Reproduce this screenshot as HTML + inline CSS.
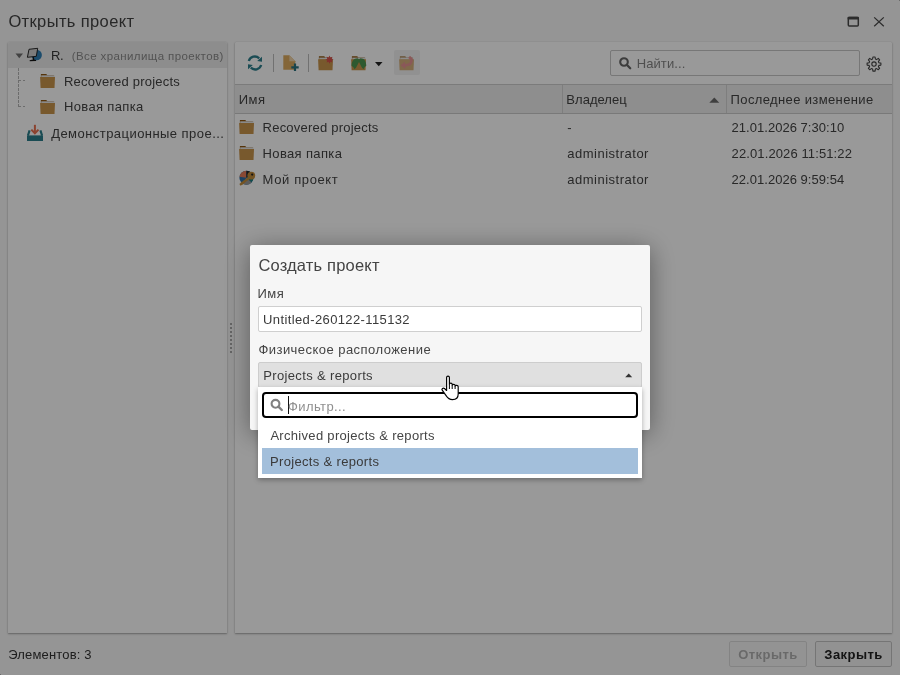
<!DOCTYPE html>
<html><head><meta charset="utf-8">
<style>
*{box-sizing:border-box;margin:0;padding:0}
html,body{width:900px;height:675px;overflow:hidden}
body{will-change:transform;background:#f8f8f8;font-family:"Liberation Sans",sans-serif;color:#444;position:relative}
.abs{position:absolute}
svg{position:absolute;overflow:visible}
.tx{position:absolute;white-space:nowrap;font-size:13px;line-height:16px}
.title{left:8px;top:11px;font-size:17px;line-height:20px;color:#444;letter-spacing:.1px}
.panel{background:#fff;border-radius:1px 1px 0 0;box-shadow:0 1px 2px rgba(0,0,0,.32),0 0 1px rgba(0,0,0,.25)}
#lp{left:8px;top:42px;width:219px;height:591px}
#rp{left:235px;top:42px;width:657px;height:591px}
.sel{left:0;top:0;width:219px;height:26px;background:#ececec;border-radius:2px 2px 0 0}
.toolbar{left:0;top:0;width:657px;height:43px;border-bottom:1px solid #cdcdcd}
.hdr{left:0;top:43px;width:657px;height:29px;background:#ededed;border-bottom:1px solid #cacaca}
.col{top:0;height:28px;border-left:1px solid #d2d2d2}
.sep{top:12px;width:1px;height:18px;background:#bdbdbd}
.overlay{left:0;top:0;width:900px;height:675px;background:rgba(0,0,0,.4)}
.modal{left:250px;top:245px;width:400px;height:185px;background:#f6f6f6;border-radius:2px;box-shadow:0 4px 26px rgba(0,0,0,.42)}
.input{background:#fff;border:1px solid #cfcfcf;border-radius:2px}
.dd{left:258px;top:387px;width:384px;height:91px;background:#fff;box-shadow:0 2px 5px rgba(0,0,0,.3)}
.btn{position:absolute;top:641px;height:26px;border:1px solid #c4c4c4;border-radius:2px;font-weight:bold;font-size:13px;text-align:center;line-height:24px;padding-top:1px;letter-spacing:.45px;background:#f3f3f3}
</style></head><body>
<svg width="0" height="0" style="position:absolute">
 <defs>
  <g id="folder">
   <path d="M0.9 0.9 h5.3 l1.2 1.3 h6.5 v2 h-13z" fill="#8f5812"/>
   <rect x="1.2" y="2.3" width="13.4" height="1.8" fill="#e6e6e6"/>
   <path d="M0.1 3.9 h14.9 l-0.5 11 h-13.9z" fill="#c9944b"/>
  </g>
 </defs>
</svg>

<div class="tx title" style="left:8.4px;top:11px;font-size:16.5px;line-height:20px;letter-spacing:.37px">Открыть проект</div>
<!-- window controls -->
<svg style="left:846px;top:15px" width="14" height="13" viewBox="0 0 14 13"><rect x="2.3" y="2.5" width="10" height="8.4" fill="none" stroke="#4a4a4a" stroke-width="1.5" rx="1"/><rect x="1.6" y="1.7" width="11.4" height="2.9" rx=".8" fill="#4a4a4a"/></svg>
<svg style="left:872px;top:16px" width="13" height="12" viewBox="0 0 13 12"><path d="M2.2 1.4 L11.8 10.2 M11.8 1.4 L2.2 10.2" stroke="#4a4a4a" stroke-width="1.25"/></svg>

<div id="lp" class="abs panel">
  <div class="abs sel"></div>
  <!-- tree lines -->
  <div class="abs" style="left:10px;top:26px;width:1px;height:39px;background:repeating-linear-gradient(to bottom,#b4b4b4 0 3px,transparent 3px 4px)"></div>
  <div class="abs" style="left:10px;top:38px;width:7px;height:1px;background:repeating-linear-gradient(to right,#b4b4b4 0 3px,transparent 3px 5px)"></div>
  <div class="abs" style="left:10px;top:64px;width:7px;height:1px;background:repeating-linear-gradient(to right,#b4b4b4 0 3px,transparent 3px 5px)"></div>
</div>
<!-- tree content -->
<svg style="left:15px;top:53px" width="9" height="6" viewBox="0 0 9 6"><path d="M0.5 0.5 h7.5 l-3.75 4.8z" fill="#6f6f6f"/></svg>
<svg style="left:27px;top:48px" width="16" height="15" viewBox="0 0 16 15">
  <circle cx="9.6" cy="7" r="5.3" fill="#2f7fb5"/>
  <path d="M2 1.3 L10.7 0.3 L9.3 8.3 L0.4 9.3 Z" fill="#cfcfcf" stroke="#151515" stroke-width="0.9" stroke-linejoin="round"/>
  <path d="M5.6 9.2 L5.9 11.6 L2.6 12.3 L2.8 13.2 L9.2 13.1 L9 12.1 L7.2 11.5 L7 9" fill="#151515"/>
</svg>
<div class="tx" style="left:51px;top:47.5px;color:#3a3a3a;letter-spacing:-.3px">R.</div>
<div class="tx" style="left:71.7px;top:48px;color:#8a8a8a;font-size:11.5px;letter-spacing:.4px">(Все хранилища проектов)</div>

<svg style="left:40px;top:73.2px" width="16" height="15" viewBox="0 0 16 15"><use href="#folder"/></svg>
<div class="tx" style="left:64px;top:73.8px;color:#444;letter-spacing:.22px">Recovered projects</div>
<svg style="left:40px;top:99.2px" width="16" height="15" viewBox="0 0 16 15"><use href="#folder"/></svg>
<div class="tx" style="left:64px;top:99.4px;color:#444;letter-spacing:.35px">Новая папка</div>

<svg style="left:26px;top:124px" width="18" height="18" viewBox="0 0 18 18">
  <path d="M3.6 6.4 L1.9 11.6 M14.4 6.4 L16.1 11.6" stroke="#2a7e8a" stroke-width="2.1"/>
  <rect x="1" y="11.4" width="16" height="5.6" fill="#2a7e8a"/>
  <path d="M8.9 0.8 V9" stroke="#e8704f" stroke-width="2"/>
  <path d="M5.3 5.6 L8.9 9.3 L12.5 5.6" fill="none" stroke="#e8704f" stroke-width="2"/>
</svg>
<div class="tx" style="left:51.2px;top:125.5px;color:#444;letter-spacing:.45px">Демонстрационные прое...</div>

<div id="rp" class="abs panel">
  <div class="abs toolbar"></div>
  <div class="abs sep" style="left:38px"></div>
  <div class="abs sep" style="left:73px"></div>
  <div class="abs" style="left:159px;top:8px;width:26px;height:25px;background:#f2f2f2;border-radius:2px"></div>
  <div class="abs input" style="left:375px;top:8px;width:250px;height:26px;border-color:#c6c6c6"></div>
  <div class="abs hdr">
    <div class="abs col" style="left:327px"></div>
    <div class="abs col" style="left:491px"></div>
  </div>
</div>
<!-- toolbar icons -->
<svg style="left:247px;top:55px" width="16" height="16" viewBox="0 0 16 16">
  <path d="M1.8 6 A6.3 6.3 0 0 1 12.2 3.3" fill="none" stroke="#2d7f8d" stroke-width="2.3"/>
  <path d="M15 1.8 L15 6.8 L10.2 6 Z" fill="#2d7f8d"/>
  <path d="M14.2 10 A6.3 6.3 0 0 1 3.8 12.7" fill="none" stroke="#2d7f8d" stroke-width="2.3"/>
  <path d="M1 14.2 L1 9.2 L5.8 10 Z" fill="#2d7f8d"/>
</svg>
<svg style="left:283px;top:55px" width="17" height="17" viewBox="0 0 17 17">
  <path d="M0.3 0.2 H6.4 L12.3 6.3 V14.8 H0.3 Z" fill="#dcab60"/>
  <path d="M6.4 0.2 L12.3 6.3 H6.4 Z" fill="#efd3a8"/>
  <path d="M12 8.6 V15.9 M8.3 12.3 H15.7" stroke="#2b7380" stroke-width="2.2"/>
</svg>
<svg style="left:318px;top:55px" width="16" height="16" viewBox="0 0 16 16">
  <use href="#folder" y="0.3"/>
  <path d="M11.5 0.6 L12.4 2.6 L14.4 1.8 L13.8 3.9 L15.6 4.7 L13.8 5.6 L14.4 7.6 L12.4 6.8 L11.5 8.8 L10.6 6.8 L8.6 7.6 L9.2 5.6 L7.4 4.7 L9.2 3.9 L8.6 1.8 L10.6 2.6 Z" fill="#d6514b"/>
</svg>
<svg style="left:351px;top:55px" width="16" height="16" viewBox="0 0 16 16">
  <use href="#folder" y="0.3"/>
  <path d="M0.5 10.8 C0.8 6 3 3.3 6.5 3.3 L8 4.3 L9.5 3.3 C13 3.3 15.2 6 15.3 10.8 L13.6 12.3 L12.4 14.2 L10.8 12.6 L8 7 L5.2 12.6 L3.6 14.2 L2.4 12.3 Z" fill="#4e944f"/>
</svg>
<svg style="left:375px;top:62px" width="8" height="5" viewBox="0 0 8 5"><path d="M0 0 H7.5 L3.75 4.2Z" fill="#222"/></svg>
<svg style="left:399px;top:55px" width="16" height="16" viewBox="0 0 16 16" opacity=".7">
  <use href="#folder" y="0.3"/>
  <path d="M11 0.8 L14 3.8 L13.5 7 C13 9.3 11 11 8.5 11.3 L6.5 11.4 L6.2 14 L1.5 10.3 L5.8 6.8 L6.2 8.9 L8.5 8.6 C10 8.3 10.8 7.4 11 6.4 L10.4 4.1 L9.2 2.9 Z" fill="#e36b6b"/>
</svg>
<!-- search -->
<svg style="left:619px;top:57px" width="13" height="13" viewBox="0 0 13 13"><circle cx="5" cy="5" r="3.8" fill="none" stroke="#666" stroke-width="2.1"/><path d="M7.8 7.8 L11.2 11.2" stroke="#666" stroke-width="2.3" stroke-linecap="round"/></svg>
<div class="tx" style="left:636.7px;top:56.3px;color:#858585;letter-spacing:.1px">Найти...</div>
<!-- gear -->
<svg style="left:866px;top:55.5px" width="16" height="16" viewBox="0 0 16 16">
  <path d="M6.9 1 H9.1 L9.4 3 L10.6 3.6 L12.3 2.4 L13.6 3.9 L12.4 5.5 L12.9 6.8 L14.9 7.1 V9.1 L12.9 9.4 L12.4 10.7 L13.6 12.3 L12.3 13.7 L10.6 12.6 L9.4 13.1 L9.1 15.1 H6.9 L6.6 13.1 L5.4 12.6 L3.7 13.7 L2.4 12.3 L3.6 10.7 L3.1 9.4 L1.1 9.1 V7.1 L3.1 6.8 L3.6 5.5 L2.4 3.9 L3.7 2.4 L5.4 3.6 L6.6 3 Z" fill="none" stroke="#444" stroke-width="1.1" stroke-linejoin="round"/>
  <circle cx="8" cy="8.05" r="2.2" fill="none" stroke="#444" stroke-width="1.1"/>
</svg>

<!-- header texts -->
<div class="tx" style="left:238.7px;top:91.7px;color:#444;letter-spacing:.5px">Имя</div>
<div class="tx" style="left:566.3px;top:91.7px;color:#444;letter-spacing:.04px">Владелец</div>
<svg style="left:709px;top:97px" width="11" height="6" viewBox="0 0 11 6"><path d="M0.3 5.8 L5.3 0.6 L10.3 5.8Z" fill="#6a6a6a"/></svg>
<div class="tx" style="left:730.6px;top:91.7px;color:#444;letter-spacing:.37px">Последнее изменение</div>

<!-- rows -->
<svg style="left:239px;top:119px" width="16" height="15" viewBox="0 0 16 15"><use href="#folder"/></svg>
<div class="tx" style="left:262.6px;top:120px;color:#444;letter-spacing:.22px">Recovered projects</div>
<div class="tx" style="left:567.3px;top:120px;color:#444">-</div>
<div class="tx" style="left:731.6px;top:120px;color:#444;letter-spacing:.03px">21.01.2026 7:30:10</div>

<svg style="left:239px;top:145px" width="16" height="15" viewBox="0 0 16 15"><use href="#folder"/></svg>
<div class="tx" style="left:262.6px;top:146px;color:#444;letter-spacing:.35px">Новая папка</div>
<div class="tx" style="left:567.3px;top:146px;color:#444;letter-spacing:.5px">administrator</div>
<div class="tx" style="left:731.6px;top:146px;color:#444;letter-spacing:.11px">22.01.2026 11:51:22</div>

<svg style="left:238px;top:170px" width="18" height="17" viewBox="0 0 18 17">
  <circle cx="8.4" cy="7.8" r="7" fill="#2e6fa6"/>
  <path d="M8.4 7.8 L1.4 6.8 A7 7 0 0 1 8.4 0.8Z" fill="#e47a58"/>
  <path d="M8.4 7.8 V0.8 A7 7 0 0 1 14.2 4Z" fill="#262626"/>
  <path d="M8.4 7.8 L14.2 4 A7 7 0 0 1 13.6 12.4Z" fill="#1f7f80"/>
  <path d="M8.4 7.8 L13.6 12.4 A7 7 0 0 1 4.5 13.6Z" fill="#9a9a9a"/>
  <circle cx="13.3" cy="5.6" r="3.9" fill="#c28c3b"/>
  <circle cx="14.2" cy="4.6" r="1.15" fill="#222"/>
  <path d="M11 8 L2 14.8" stroke="#c28c3b" stroke-width="2.3"/>
  <path d="M3.3 12.3 L5 14.2 M5.1 10.9 L6.6 12.7" stroke="#c28c3b" stroke-width="1.5"/>
</svg>
<div class="tx" style="left:262.6px;top:172px;color:#444;letter-spacing:.62px">Мой проект</div>
<div class="tx" style="left:567.3px;top:172px;color:#444;letter-spacing:.5px">administrator</div>
<div class="tx" style="left:731.6px;top:172px;color:#444;letter-spacing:.03px">22.01.2026 9:59:54</div>

<!-- splitter dots -->
<div class="abs" style="left:230px;top:323px;width:2px;height:30px;background:repeating-linear-gradient(#a8a8a8 0 2px,transparent 2px 4px)"></div>

<div class="tx" style="left:8.3px;top:646.5px;color:#333;letter-spacing:.16px">Элементов: 3</div>
<div class="btn" style="left:729px;width:78px;color:#b0b0b0;border-color:#dadada;background:#f6f6f6">Открыть</div>
<div class="btn" style="left:815px;width:77px;color:#222">Закрыть</div>

<div class="abs overlay"></div>
<div class="abs" style="left:899px;top:0;width:1px;height:1px;background:#6a6a6a"></div>
<div class="abs" style="left:0;top:674px;width:1px;height:1px;background:#6a6a6a"></div>

<div class="abs modal">
  <div class="tx" style="left:8.4px;top:9.6px;font-size:16.5px;line-height:20px;color:#444;letter-spacing:.18px">Создать проект</div>
  <div class="tx" style="left:7.4px;top:40.6px;color:#444;letter-spacing:.6px">Имя</div>
  <div class="abs input" style="left:8px;top:61px;width:384px;height:26px"></div>
  <div class="tx" style="left:13.1px;top:67.2px;color:#3a3a3a;letter-spacing:.38px">Untitled-260122-115132</div>
  <div class="tx" style="left:8.4px;top:97.3px;color:#444;letter-spacing:.46px">Физическое расположение</div>
  <div class="abs" style="left:8px;top:117px;width:384px;height:26px;background:#e0e0e0;border:1px solid #cdcdcd;border-radius:2px"></div>
  <div class="tx" style="left:13.2px;top:122.5px;color:#3a3a3a;letter-spacing:.36px">Projects &amp; reports</div>
  <svg style="left:375px;top:128px" width="8" height="5" viewBox="0 0 8 5"><path d="M0.2 4.2 L3.7 0.6 L7.2 4.2Z" fill="#333"/></svg>
</div>
<div class="abs dd">
  <div class="abs" style="left:4px;top:5px;width:376px;height:26px;border:2px solid #000;border-radius:4px;background:#fff"></div>
  <svg style="left:12px;top:11px" width="14" height="14" viewBox="0 0 14 14"><circle cx="5.5" cy="5.8" r="3.9" fill="none" stroke="#808080" stroke-width="2.1"/><path d="M8.4 8.7 L11.8 12" stroke="#808080" stroke-width="2.4" stroke-linecap="round"/></svg>
  <div class="abs" style="left:30px;top:9px;width:1px;height:18px;background:#111"></div>
  <div class="tx" style="left:30px;top:11.7px;color:#8f8f8f;letter-spacing:.4px">Фильтр...</div>
  <div class="tx" style="left:12.4px;top:40.5px;color:#444;letter-spacing:.31px">Archived projects &amp; reports</div>
  <div class="abs" style="left:4px;top:61px;width:376px;height:26px;background:#a3bfdb"></div>
  <div class="tx" style="left:12px;top:66.7px;color:#3a3a3a;letter-spacing:.33px">Projects &amp; reports</div>
</div>

<!-- hand cursor -->
<svg style="left:440px;top:375px" width="22" height="26" viewBox="0 0 22 26">
  <path d="M6.6 15.5 V2.4 C6.6 0.6 9.4 0.6 9.4 2.4 V9.3 C9.4 7.8 12.2 7.8 12.2 9.3 V10.3 C12.2 9 15.1 9 15.1 10.3 V11.2 C15.1 10 18.2 10 18.2 11.7 V19 C18.2 23 15.8 24.6 12.5 24.6 C9.3 24.6 7.6 23 6.1 20.6 L2.2 15.2 C1.2 13.8 3.2 12.4 4.5 13.5 Z" fill="#fff" stroke="#000" stroke-width="1.15" stroke-linejoin="round"/>
  <path d="M9.4 9.3 V14 M12.2 10.3 V14 M15.1 11.2 V14" stroke="#000" stroke-width="1"/>
</svg>
</body></html>
